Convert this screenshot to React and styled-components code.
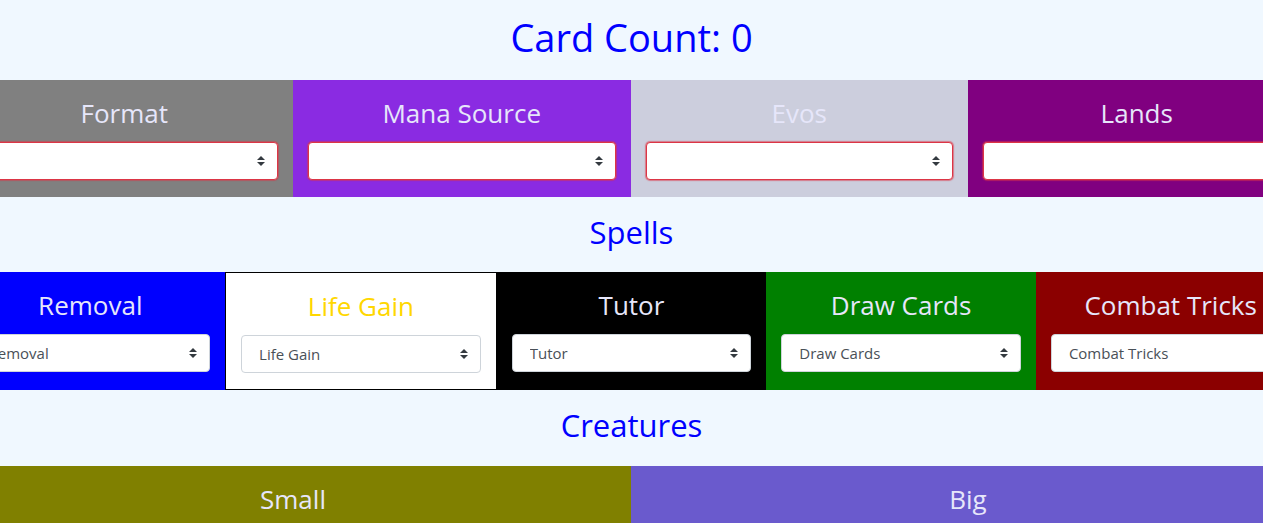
import styled, { createGlobalStyle } from 'styled-components'

const GlobalStyle = createGlobalStyle`
  html, body {
    margin: 0;
    padding: 0;
    overflow: hidden;
    background: aliceblue;
    font-family: "Open Sans", "Noto Sans", sans-serif;
  }
`

const arrow = `url("data:image/svg+xml,%3csvg xmlns='http://www.w3.org/2000/svg' width='4' height='5' viewBox='0 0 4 5'%3e%3cpath fill='%23343a40' d='M2 0L0 2h4zm0 5L0 3h4z'/%3e%3c/svg%3e")`

const Page = styled.div`
  background: aliceblue;
  text-align: center;
`

const Title = styled.h1`
  margin: 0;
  height: 80px;
  box-sizing: border-box;
  padding-bottom: 6px;
  display: flex;
  align-items: center;
  justify-content: center;
  color: #0000ff;
  font-size: 38px;
  font-weight: 400;
`

const SectionTitle = styled.h2`
  margin: 0;
  height: ${(p) => p.$h || 75}px;
  box-sizing: border-box;
  padding-bottom: 6px;
  display: flex;
  align-items: center;
  justify-content: center;
  color: #0000ff;
  font-size: 31px;
  font-weight: 400;
`

const Row = styled.div`
  display: flex;
  width: 1350px;
  margin-left: -44.5px;
`

const Col = styled.div`
  flex: 1 1 0;
  min-width: 0;
  box-sizing: border-box;
  padding: 16px 15px ${(p) => (p.$bordered ? 16 : 17)}px;
  background: ${(p) => p.$bg};
  border: ${(p) => (p.$bordered ? '1px solid #000' : 'none')};
  display: flex;
  flex-direction: column;
`

const Label = styled.h3`
  margin: 0 0 12px;
  font-size: 26px;
  line-height: 34px;
  font-weight: 400;
  color: ${(p) => p.$color || 'lavender'};
`

const Select = styled.select`
  display: block;
  width: 100%;
  height: 38px;
  box-sizing: border-box;
  padding: 6px 28px 6px 17px;
  font-family: inherit;
  font-size: 15px;
  color: #495057;
  background: #fff ${arrow} no-repeat right 12px center / 8px 10px;
  border: 1px solid ${(p) => (p.$invalid ? '#dc3545' : '#ced4da')};
  border-radius: 4px;
  box-shadow: ${(p) => (p.$invalid ? '0 0 1px 1px rgba(220, 53, 69, 0.55)' : 'none')};
  appearance: none;
  outline: none;
`

const topRow = [
  { name: 'Format', bg: '#808080' },
  { name: 'Mana Source', bg: '#8a2be2' },
  { name: 'Evos', bg: '#cccedd' },
  { name: 'Lands', bg: '#800080' },
]

const spells = [
  { name: 'Removal', bg: '#0000ff' },
  { name: 'Life Gain', bg: '#ffffff', color: '#ffd700', bordered: true },
  { name: 'Tutor', bg: '#000000' },
  { name: 'Draw Cards', bg: '#008000' },
  { name: 'Combat Tricks', bg: '#8b0000' },
]

const creatures = [
  { name: 'Small', bg: '#808000' },
  { name: 'Big', bg: '#6a5acd' },
]

const App = () => {
  const count = 0

  return (
    <Page>
      <GlobalStyle />
      <Title>Card Count: {count}</Title>

      <Row>
        {topRow.map((c) => (
          <Col key={c.name} $bg={c.bg}>
            <Label>{c.name}</Label>
            <Select $invalid defaultValue="">
              <option value=""></option>
            </Select>
          </Col>
        ))}
      </Row>

      <SectionTitle>Spells</SectionTitle>
      <Row>
        {spells.map((c) => (
          <Col key={c.name} $bg={c.bg} $bordered={c.bordered}>
            <Label $color={c.color}>{c.name}</Label>
            <Select defaultValue={c.name}>
              <option value={c.name}>{c.name}</option>
            </Select>
          </Col>
        ))}
      </Row>

      <SectionTitle $h={76}>Creatures</SectionTitle>
      <Row>
        {creatures.map((c) => (
          <Col key={c.name} $bg={c.bg}>
            <Label>{c.name}</Label>
            <Select defaultValue={c.name}>
              <option value={c.name}>{c.name}</option>
            </Select>
          </Col>
        ))}
      </Row>
    </Page>
  )
}

export default App
